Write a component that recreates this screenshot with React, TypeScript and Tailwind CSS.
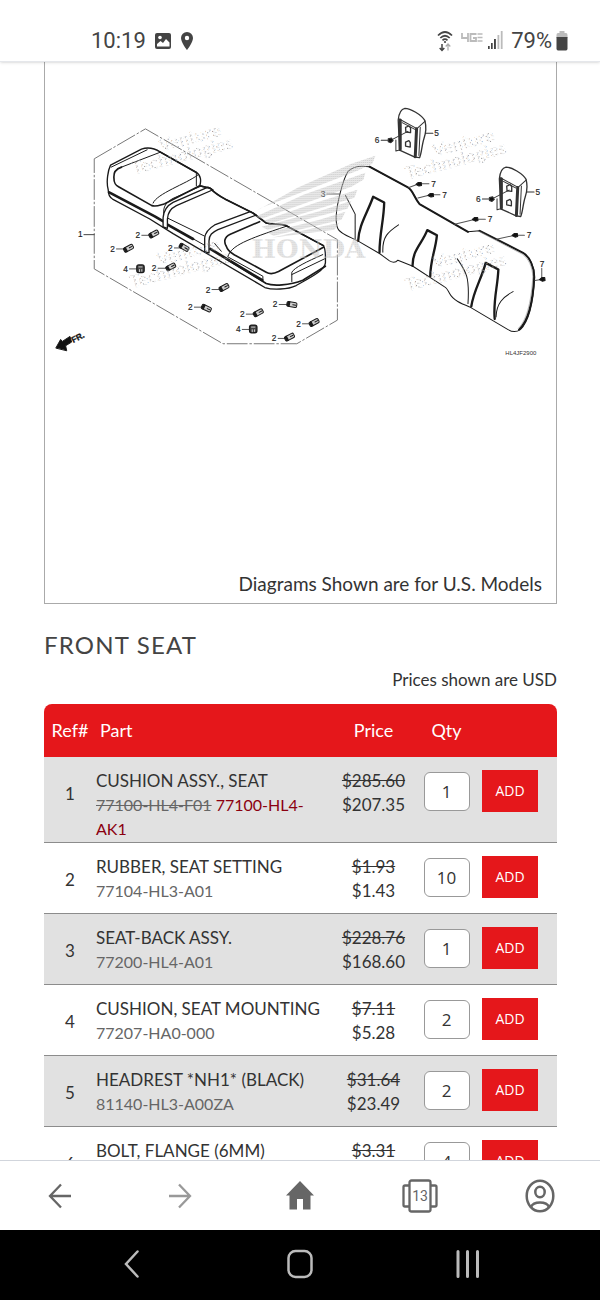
import React from "react";

type Part = {
  ref: number;
  name: string;
  number: string;
  replacement?: string;
  list: string;
  price: string;
  qty: string;
};

const parts: Part[] = [
  { ref: 1, name: "CUSHION ASSY., SEAT", number: "77100-HL4-F01", replacement: "77100-HL4-AK1", list: "$285.60", price: "$207.35", qty: "1" },
  { ref: 2, name: "RUBBER, SEAT SETTING", number: "77104-HL3-A01", list: "$1.93", price: "$1.43", qty: "10" },
  { ref: 3, name: "SEAT-BACK ASSY.", number: "77200-HL4-A01", list: "$228.76", price: "$168.60", qty: "1" },
  { ref: 4, name: "CUSHION, SEAT MOUNTING", number: "77207-HA0-000", list: "$7.11", price: "$5.28", qty: "2" },
  { ref: 5, name: "HEADREST *NH1* (BLACK)", number: "81140-HL3-A00ZA", list: "$31.64", price: "$23.49", qty: "2" },
  { ref: 6, name: "BOLT, FLANGE (6MM)", number: "90106-HL3-A00", list: "$3.31", price: "$2.45", qty: "4" },
];

/* label x, label y, clip x, clip y, clip angle */
const clips: number[][] = [
  [294, 437, 342, 433, -28],
  [218, 478, 266, 476, -28],
  [392, 475, 433, 473, 30],
  [343, 536, 393, 532, -28],
  [505, 600, 553, 594, -28],
  [452, 653, 500, 656, 25],
  [608, 674, 656, 670, -28],
  [707, 645, 757, 645, 10],
  [777, 703, 824, 699, -28],
  [704, 747, 750, 743, -28],
];

const bushings: number[][] = [
  [257, 538, 302, 537],
  [596, 720, 641, 718],
];

/* label x, label y, screw x, screw y, seat-back x, seat-back y */
const screws: number[][] = [
  [311, 281, 268, 282, 238, 292],
  [344, 314, 304, 315, 265, 324],
  [480, 387, 437, 387, 375, 402],
  [597, 435, 556, 435, 500, 447],
  [636, 520, 638, 567, 616, 571],
];

const watermarks: number[][] = [
  [408, 180],
  [134, 175],
  [408, 292],
  [132, 289],
];

function Watermark({ x, y }: { x: number; y: number }) {
  return (
    <g transform={`translate(${x} ${y}) rotate(-15)`} fill="url(#speckle)" fontFamily="Lato, sans-serif" fontWeight="700" fontSize="18">
      <text x="32" y="-15">Venture</text>
      <text x="0" y="0">Technologies</text>
    </g>
  );
}

function Headrest({ x, y }: { x: number; y: number }) {
  return (
    <g transform={`translate(${x} ${y})`} fill="#fff">
      <path d="M206 90C208 70 214 57 226 55C242 55 276 74 286 92C290 108 288 132 283 146C277 164 276 190 270 203L256 201L210 180Z" strokeWidth="4" />
      <path d="M209 87L262 116L286 94M218 98L256 118M210 180L199 183V150M272 112L268 196" fill="none" />
      <path d="M212 90V178M261 116L257 200" fill="none" strokeWidth="9" />
      <path d="M228 112L238 108L243 113V128L229 126ZM228 156L238 152L242 158V171L228 168Z" strokeWidth="4" />
      <path d="M183 151L235 124M288 130H310M155 151H175" fill="none" />
      <path d="M176 146L186 144L191 152L184 158L176 155Z" fill="#111" />
      <g fill="#222" strokeWidth=".5">
        <text x="136" y="160">6</text>
        <text x="314" y="138">5</text>
      </g>
    </g>
  );
}

function SeatDiagram() {
  return (
    <svg viewBox="45 62 512 300" className="block w-full" role="img" aria-label="Front seat exploded view">
      <defs>
        <pattern id="speckle" width="5" height="4" patternUnits="userSpaceOnUse">
          <rect width="1" height="1" fill="#999" />
          <rect x="2" y="2" width="1" height="1" fill="#888" />
          <rect x="4" y="1" width="1" height="1" fill="#bbb" />
          <rect x="3.500" y="3" width="1" height="1" fill="#ccc" />
        </pattern>
        <pattern id="halftone" width="2" height="2" patternUnits="userSpaceOnUse">
          <rect width="1" height="1" fill="#aaa" />
          <rect x="1" y="1" width="1" height="1" fill="#ddd" />
        </pattern>
      </defs>

      <g stroke="#1a1a1a" strokeWidth="3" strokeLinejoin="round" strokeLinecap="round" fontFamily="Liberation Sans, sans-serif" fontSize="25">
        <g transform="translate(40 90) scale(.3333)">
          <path d="M163 207L317 117L894 450V692L772 763H550L163 538Z" fill="none" stroke="#777" strokeDasharray="60 8 5 8" />
          <path
            fill="#fff"
            strokeWidth="4"
            d="M205 300C198 275 205 240 212 226L305 178C325 171 345 176 362 187L470 248C484 256 485 275 480 288L512 296C530 315 545 322 560 330L640 370L680 400C700 405 722 402 740 408L852 468C860 480 858 500 858 520C856 545 800 570 770 588C745 600 700 602 676 594L400 432L330 388L218 328C208 322 205 312 205 300Z"
          />
          <path fill="none" strokeWidth="8" d="M208 308L345 380L372 396M512 478L668 572M382 404L460 448" />
          <path fill="none" strokeWidth="5" d="M560 508L680 582C700 590 750 588 790 572L858 530" />
          <path fill="none" strokeWidth="5" d="M245 232C228 238 221 248 222 262C222 280 226 286 236 291L335 347C348 353 360 346 375 342L480 288" />
          <path fill="none" d="M245 232L362 187M214 232L322 180M340 340C350 312 440 282 474 256M470 248V288M385 386L500 442M383 404L495 467M525 462L545 485" />
          <path fill="none" d="M482 290L400 326C378 338 370 352 372 370" />
          <path fill="#fff" strokeWidth="4" d="M370 412V384C372 358 385 346 400 338L505 292L520 300L410 348C394 356 384 366 383 388V416Z" />
          <path fill="#fff" strokeWidth="4" d="M495 486V445C497 425 510 415 525 406L632 366L650 376L535 420C518 428 508 436 508 454V490Z" />
          <path fill="none" strokeWidth="5" d="M660 396L572 434C552 444 553 458 560 470C565 486 575 490 585 496L680 548C692 555 705 552 717 546L852 473" />
          <path fill="none" d="M565 500C575 468 620 450 740 410M565 502L670 560V572M757 576V548C765 534 800 517 850 495M757 555L855 508" />
          <path fill="none" strokeWidth="5" d="M480 288L512 296C530 315 545 322 560 330L640 370L680 400C700 405 722 402 740 408L852 468M362 187L470 248" />

          <path fill="none" stroke="#444" d="M132 435H163" />
          <text x="114" y="443" fill="#222" strokeWidth=".5">1</text>
          {clips.map(([lx, ly, px, py, angle]) => (
            <g key={`${lx}-${ly}`}>
              <text x={lx - 7} y={ly + 9} fill="#222" strokeWidth=".5">2</text>
              <path d={`M${lx + 12} ${ly}H${px - 12}`} stroke="#555" />
              <g transform={`translate(${px} ${py}) rotate(${angle})`}>
                <rect x="-15" y="-7" width="30" height="14" rx="4" fill="#ccc" strokeWidth="3" />
                <path d="M-8 -6V6M-12 -4V5" strokeWidth="5" />
                <path d="M3 0H12" />
              </g>
            </g>
          ))}
          {bushings.map(([lx, ly, px, py]) => (
            <g key={`${lx}-${ly}`}>
              <text x={lx - 7} y={ly + 9} fill="#222" strokeWidth=".5">4</text>
              <path d={`M${lx + 12} ${ly}H${px - 12}`} stroke="#555" />
              <rect x={px - 11} y={py - 11} width="22" height="23" rx="6" fill="#444" strokeWidth="4" />
              <path d={`M${px - 5} ${py - 5}H${px + 5}M${px - 3} ${py + 3}V${py + 9}M${px + 4} ${py + 3}V${py + 8}`} stroke="#ccc" />
            </g>
          ))}

          <path d="M48 775L62 750L67 756L90 741L95 758L77 769L80 783Z" fill="#111" />
          <text transform="translate(100 761) rotate(-28)" fill="#111" strokeWidth="1" fontWeight="700" fontSize="25">FR.</text>
        </g>

        <g transform="translate(330 90) scale(.3345)">
          <path
            fill="#fff"
            d="M20 380C22 340 40 270 55 245C70 228 95 226 120 230L235 292C250 300 255 325 270 342L415 425L450 422L580 488C600 500 615 530 615 560C612 620 600 690 572 718C560 726 545 724 535 718L420 650C395 640 370 630 360 610C355 600 350 592 345 590L250 528L205 510C198 518 190 518 180 512L150 490L85 452C60 440 30 430 25 415C20 405 20 395 20 380Z"
          />
          <path fill="none" strokeWidth="6" d="M120 230L235 292C250 300 255 325 270 342L415 425M450 422L580 488C600 500 613 530 613 560C610 620 598 690 568 718" />
          <path fill="none" stroke="#999" strokeWidth="2" d="M450 425L578 492C596 504 609 532 609 560C606 620 594 688 566 714" />
          <path fill="none" strokeWidth="7" d="M86 452C88 405 112 372 131 320L164 337C163 390 150 430 150 486M249 527C248 480 278 460 293 420L322 435C318 480 302 510 302 558M425 648C432 600 456 565 468 518L506 538C504 590 490 630 495 686" />
          <path fill="none" d="M48 316L77 372V446M160 486C158 440 175 425 207 404M383 506C410 545 420 560 415 640M499 680C500 640 520 620 550 604" />
          <g stroke="#333">
            <Headrest x={0} y={0} />
            <Headrest x={303} y={176} />
          </g>
          {screws.map(([lx, ly, px, py, bx, by], i) => (
            <g key={`${lx}-${ly}`}>
              <path d={i === 4 ? `M${lx} ${ly + 14}V${py - 6}M${px} ${py}L${bx} ${by}` : `M${lx - 13} ${ly}H${px}L${bx} ${by}`} stroke="#555" fill="none" />
              <path d={`M${px - 9} ${py + 1}L${px - 2} ${py - 5}L${px + 7} ${py - 5}L${px + 8} ${py + 4}L${px} ${py + 6}Z`} fill="#111" />
              <text x={lx - 6} y={ly + 9} fill="#222" strokeWidth=".5">7</text>
            </g>
          ))}
          <path d="M-8 312H30" stroke="#666" />
          <text x="-26" y="320" fill="#222" strokeWidth=".5">3</text>
          <text x="527" y="794" stroke="none" fill="#333" fontSize="18">HL4JF2900</text>
        </g>
      </g>

      {watermarks.map(([x, y]) => (
        <Watermark key={`${x}-${y}`} x={x} y={y} />
      ))}

      <g fill="url(#halftone)">
        <path d="M252 214L298 188L352 164L376 156L373 164L358 171L262 208Z" />
        <path d="M256 217L304 195L366 173L364 180L352 187L262 219Z" />
        <path d="M264 221L316 203L358 190L355 198L270 224Z" />
        <path d="M262 227L318 212L352 201L348 209L268 230Z" />
        <path d="M268 233L320 220L346 212L342 220L274 236Z" />
        <path d="M272 238L316 228L340 223L335 230L280 237Z" />
        <text x="252" y="258" fontFamily="DejaVu Serif, serif" fontWeight="700" fontSize="26">HONDA</text>
      </g>
    </svg>
  );
}

function StatusBar() {
  return (
    <header className="relative z-10 flex h-[62px] shrink-0 items-end justify-between border-b border-gray-200 bg-white pr-8 pb-2 pl-[91px] font-[Roboto,sans-serif] text-[22px] text-[#444] shadow-sm">
      <div className="flex items-center gap-2">
        <span>10:19</span>
        <svg viewBox="0 0 18 18" className="size-[18px]" aria-hidden="true">
          <rect x="1" y="1" width="16" height="16" rx="2" fill="#444" />
          <path d="M3 12L6.500 9L9 11L12 7L15.500 10.500V14.500H3Z" fill="#fff" />
          <circle cx="6" cy="5.500" r="1.800" fill="#fff" />
        </svg>
        <svg viewBox="0 0 14 20" className="h-5 w-[14px]" aria-hidden="true">
          <path d="M7 1A6 6 0 0 0 1 7C1 11.500 7 19 7 19S13 11.500 13 7A6 6 0 0 0 7 1ZM7 9.200A2.200 2.200 0 1 1 7 4.800A2.200 2.200 0 0 1 7 9.200Z" fill="#444" />
        </svg>
      </div>
      <div className="flex items-center">
        <svg viewBox="0 0 16 22" className="mr-2 h-[22px] w-4" fill="none" aria-hidden="true">
          <path d="M1 5.500Q8 -1.500 15 5.500M3.300 8Q8 3.500 12.700 8M5.500 10.300Q8 8 10.500 10.300" stroke="#444" strokeWidth="1.700" />
          <circle cx="8" cy="12" r="1.100" fill="#444" />
          <path d="M5 14V20.500M2.700 18L5 20.500L7.300 18" stroke="#444" strokeWidth="1.500" />
          <path d="M11 20.500V14M8.700 16.500L11 14L13.300 16.500" stroke="#aaa" strokeWidth="1.200" />
        </svg>
        <svg viewBox="0 0 22 22" className="mr-1 size-[22px]" fill="none" stroke="#bbb" strokeWidth="1.800" role="img" aria-label="4G LTE">
          <path d="M1 3V8H7M7 3V12M15.500 4H9.500V11H15V8H12" />
          <path d="M16.500 4H21.500M16.500 7.500H21.500M16.500 11H21.500" strokeWidth="1.400" />
        </svg>
        <svg viewBox="0 0 16 20" className="mr-2 h-5 w-4" aria-hidden="true">
          <path d="M1 15H2.700V18H1ZM4 12H5.700V18H4ZM7 8H8.900V18H7Z" fill="#444" />
          <path d="M10.500 4H12.300V18H10.500ZM13.800 0H15.600V18H13.800Z" fill="#bbb" />
        </svg>
        <span>79%</span>
        <svg viewBox="0 0 12 20" className="ml-1 h-5 w-3" aria-hidden="true">
          <path d="M.5 4Q.5 2 2 2H3.500V0H8.500V2H10Q11.500 2 11.500 4V7H.5Z" fill="#bbb" />
          <path d="M.5 6H11.500V17.500Q11.500 19.500 10 19.500H2Q.5 19.500 .5 17.500Z" fill="#444" />
        </svg>
      </div>
    </header>
  );
}

function PartRow({ part }: { part: Part }) {
  return (
    <tr className="h-[71px] border-b border-[#8c8c8c] align-top odd:bg-[#e1e1e1]">
      <td className="pt-[25px] text-center">{part.ref}</td>
      <td className="pt-3 pb-px">
        <div>{part.name}</div>
        <div className="text-base leading-6 text-[#666]">
          {part.replacement ? (
            <>
              <s>{part.number}</s> <span className="text-[#8b0010]">{part.replacement}</span>
            </>
          ) : (
            part.number
          )}
        </div>
      </td>
      <td className="pt-3 text-center">
        <s className="block">{part.list}</s>
        <span className="block">{part.price}</span>
      </td>
      <td className="pt-[15px] text-center">
        <input
          type="text"
          aria-label={`Quantity, ${part.name}`}
          defaultValue={part.qty}
          className="mx-auto block h-[39px] w-[46px] rounded-md border border-[#999] bg-white text-center font-['Open_Sans',sans-serif] text-[17px]"
        />
      </td>
      <td className="pt-[13px] pl-2">
        <button type="button" className="block h-[42px] w-14 bg-[#e5171b] font-['Open_Sans',sans-serif] text-sm text-white">
          ADD
        </button>
      </td>
    </tr>
  );
}

function BrowserBar() {
  return (
    <nav aria-label="Browser" className="relative z-10 grid h-[70px] shrink-0 grid-cols-5 place-items-center border-t border-gray-300 bg-white text-[#666]">
      <button type="button" aria-label="Back">
        <svg viewBox="0 0 24 26" className="h-[26px] w-6" fill="none" stroke="currentColor" strokeWidth="2.300">
          <path d="M23 13H2M13 1.500L2 13L13 24.500" />
        </svg>
      </button>
      <button type="button" aria-label="Forward" className="text-[#999]">
        <svg viewBox="0 0 24 26" className="h-[26px] w-6" fill="none" stroke="currentColor" strokeWidth="2.300">
          <path d="M1 13H22M11 1.500L22 13L11 24.500" />
        </svg>
      </button>
      <button type="button" aria-label="Home">
        <svg viewBox="0 0 28 30" className="h-[30px] w-7" fill="currentColor">
          <path d="M14 0L28 14.500H24.500V28.500H17V18H11V28.500H3.500V14.500H0Z" />
        </svg>
      </button>
      <button type="button" aria-label="13 open tabs">
        <svg viewBox="0 0 36 34" className="h-[34px] w-9" fill="none" stroke="currentColor" strokeWidth="2.300">
          <rect x="7.500" y="1.500" width="21" height="31" rx="2" />
          <path d="M7.500 6.500H3Q1.500 6.500 1.500 8V26Q1.500 27.500 3 27.500H7.500M28.500 6.500H33Q34.500 6.500 34.500 8V26Q34.500 27.500 33 27.500H28.500" />
          <text x="18" y="22" textAnchor="middle" fill="currentColor" stroke="none" fontFamily="Roboto, sans-serif" fontSize="14">13</text>
        </svg>
      </button>
      <button type="button" aria-label="Account">
        <svg viewBox="0 0 30 34" className="h-[34px] w-[30px]" fill="none" stroke="currentColor" strokeWidth="2.500">
          <ellipse cx="15" cy="17" rx="13.300" ry="15.300" />
          <ellipse cx="15" cy="13" rx="4.700" ry="5.300" />
          <path d="M6 28C8.500 22 21.500 22 24 28" />
        </svg>
      </button>
    </nav>
  );
}

function SystemBar() {
  return (
    <nav aria-label="System" className="flex h-[70px] shrink-0 items-center justify-between bg-black px-[119px] pb-0.5 text-[#bbb]">
      <button type="button" aria-label="Back">
        <svg viewBox="0 0 26 30" className="h-[30px] w-[26px]" fill="none" stroke="currentColor" strokeWidth="2.500" strokeLinecap="round">
          <path d="M18.500 2.500L7 15L18.500 27.500" />
        </svg>
      </button>
      <button type="button" aria-label="Home">
        <svg viewBox="0 0 26 30" className="h-[30px] w-[26px]" fill="none" stroke="currentColor" strokeWidth="2.500">
          <rect x="1.500" y="2" width="23" height="26" rx="7" />
        </svg>
      </button>
      <button type="button" aria-label="Recent apps">
        <svg viewBox="0 0 26 30" className="h-[30px] w-[26px]" stroke="currentColor" strokeWidth="3" strokeLinecap="round">
          <path d="M3 2.500V27.500M12.500 2.500V27.500M22.500 2.500V27.500" />
        </svg>
      </button>
    </nav>
  );
}

export default function App() {
  return (
    <div className="flex h-screen flex-col overflow-hidden bg-white font-[Lato,sans-serif] text-[17px] leading-6 text-[#333]">
      <StatusBar />
      <main className="min-h-0 flex-1 overflow-hidden pr-[43px] pl-11">
        <section className="border-x border-b border-[#aaa]">
          <SeatDiagram />
          <p className="mt-[211px] pr-[14px] pb-[7px] text-right text-[19px] leading-6">Diagrams Shown are for U.S. Models</p>
        </section>
        <h1 className="mt-[27px] text-2xl leading-7 tracking-wider text-[#444]">FRONT SEAT</h1>
        <p className="mt-[9px] mb-3 text-right">Prices shown are USD</p>
        <div className="overflow-hidden rounded-t-lg">
          <table className="w-full table-fixed border-collapse">
            <colgroup>
              <col className="w-[52px]" />
              <col />
              <col className="w-[91px]" />
              <col className="w-[55px]" />
              <col className="w-[83px]" />
            </colgroup>
            <thead>
              <tr className="h-[53px] bg-[#e5171b] text-lg leading-6 text-white">
                <th scope="col" className="pb-0.5 font-normal">Ref#</th>
                <th scope="col" className="pb-0.5 pl-1 text-left font-normal">Part</th>
                <th scope="col" className="pb-0.5 font-normal">Price</th>
                <th scope="col" className="pb-0.5 font-normal">Qty</th>
                <td />
              </tr>
            </thead>
            <tbody>
              {parts.map((part) => (
                <PartRow key={part.ref} part={part} />
              ))}
            </tbody>
          </table>
        </div>
      </main>
      <BrowserBar />
      <SystemBar />
    </div>
  );
}
